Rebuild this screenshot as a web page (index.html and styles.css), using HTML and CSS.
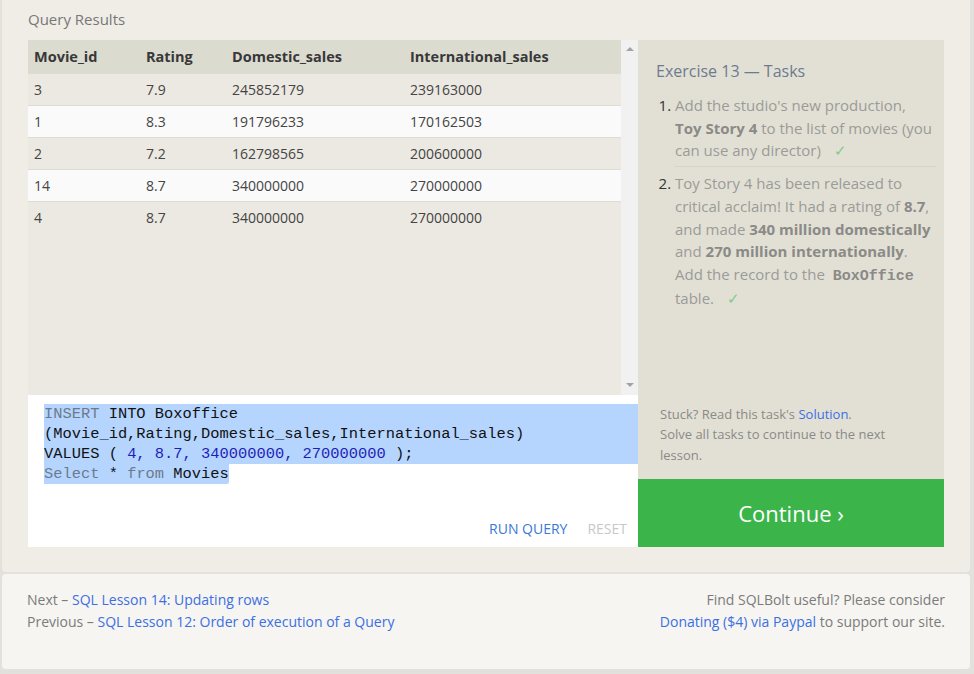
FILE: index.html
```html
<!DOCTYPE html>
<html>
<head>
<meta charset="utf-8">
<title>SQLBolt - Lesson 13</title>
<link rel="stylesheet" href="styles.css">
</head>
<body>
<div class="shell">
  <section class="lesson">
    <h2 class="results-title">Query Results</h2>
    <div class="workspace">
      <div class="left">
        <div class="results">
          <div class="table-wrap">
            <table>
              <thead>
                <tr><th class="c1">Movie_id</th><th class="c2">Rating</th><th class="c3">Domestic_sales</th><th>International_sales</th></tr>
              </thead>
              <tbody>
                <tr><td>3</td><td>7.9</td><td>245852179</td><td>239163000</td></tr>
                <tr class="alt"><td>1</td><td>8.3</td><td>191796233</td><td>170162503</td></tr>
                <tr><td>2</td><td>7.2</td><td>162798565</td><td>200600000</td></tr>
                <tr class="alt"><td>14</td><td>8.7</td><td>340000000</td><td>270000000</td></tr>
                <tr><td>4</td><td>8.7</td><td>340000000</td><td>270000000</td></tr>
              </tbody>
            </table>
          </div>
          <div class="scrollbar"><span class="arrow up"></span><span class="arrow down"></span></div>
        </div>
        <div class="editor">
          <div class="code">
            <div class="line sel"><span class="kw">INSERT</span> INTO Boxoffice</div>
            <div class="line sel">(Movie_id,Rating,Domestic_sales,International_sales)</div>
            <div class="line sel">VALUES ( <span class="num">4, 8.7, 340000000, 270000000</span> );</div>
            <div class="line"><span class="sel-part"><span class="kw">Select</span> * <span class="kw">from</span> Movies</span></div>
          </div>
          <div class="actions"><span class="run">RUN QUERY</span><span class="reset">RESET</span></div>
        </div>
      </div>
      <div class="right">
        <div class="tasks">
          <h3 class="tasks-title">Exercise 13 — Tasks</h3>
          <ol class="task-list">
            <li>Add the studio's new production, <strong>Toy Story 4</strong> to the list of movies (you can use any director) <span class="check">✓</span></li>
            <li>Toy Story 4 has been released to critical acclaim! It had a rating of <strong>8.7</strong>, and made <strong>340 million domestically</strong> and <strong>270 million internationally</strong>. Add the record to the <code>BoxOffice</code> table. <span class="check">✓</span></li>
          </ol>
          <div class="stuck">
            Stuck? Read this task's <a class="link">Solution</a>.<br>
            Solve all tasks to continue to the next lesson.
          </div>
        </div>
        <a class="continue">Continue ›</a>
      </div>
    </div>
  </section>
  <footer class="footer">
    <div class="nav">
      <div>Next – <a class="link">SQL Lesson 14: Updating rows</a></div>
      <div>Previous – <a class="link">SQL Lesson 12: Order of execution of a Query</a></div>
    </div>
    <div class="donate">
      <div>Find SQLBolt useful? Please consider</div>
      <div><a class="link">Donating ($4) via Paypal</a> to support our site.</div>
    </div>
  </footer>
</div>
</body>
</html>
```

FILE: styles.css
```css
* { box-sizing: border-box; }

body {
  margin: 0;
  background: #e3e1db;
  font-family: "Open Sans", "Noto Sans", sans-serif;
}

.shell {
  width: 968px;
  margin-left: 2px;
}

.lesson {
  background: #efede6;
  height: 572px;
  padding: 8px 0 0 26px;
  border-radius: 0 0 4px 4px;
}

.results-title {
  margin: 0 0 10px;
  font-weight: 400;
  font-size: 15px;
  line-height: 22px;
  color: #777;
}

.workspace {
  display: grid;
  grid-template-columns: 610px 306px;
}

.left {
  display: flex;
  flex-direction: column;
}

.results {
  display: flex;
  height: 355px;
  background: #ebe9e2;
}

.table-wrap { flex: 1; }

table {
  width: 100%;
  border-collapse: collapse;
}

th {
  background: #dcdbd0;
  height: 33px;
  text-align: left;
  padding: 1px 6px 0;
  font-size: 14.5px;
  font-weight: 700;
  color: #383838;
}

th.c1 { width: 112px; }
th.c2 { width: 86px; }
th.c3 { width: 178px; }

td {
  height: 32px;
  padding: 0 6px;
  font-size: 14px;
  color: #444;
  border-top: 1px solid #dddcd5;
}

tr.alt td { background: #fafafa; }

.scrollbar {
  width: 17px;
  background: #f1f1f1;
  display: flex;
  flex-direction: column;
  justify-content: space-between;
  align-items: center;
  padding: 7px 0 8px;
}

.arrow {
  width: 0;
  height: 0;
  border-left: 4px solid transparent;
  border-right: 4px solid transparent;
}
.arrow.up { border-bottom: 4px solid #a3a3a3; }
.arrow.down { border-top: 4px solid #a3a3a3; }

.editor {
  background: #fff;
  height: 152px;
  display: flex;
  flex-direction: column;
  justify-content: space-between;
  padding: 9px 0 8px 16px;
}

.code {
  font-family: "Liberation Mono", "DejaVu Sans Mono", monospace;
  font-size: 15.4px;
  line-height: 20px;
  color: #111;
}

.line { white-space: pre; height: 20px; }
.line.sel { background: #b5d5ff; }
.sel-part { background: #b5d5ff; display: inline-block; height: 20px; border-radius: 0 0 2px 0; }

.kw { color: #6c7a8c; }
.num { color: #1f1fb8; }

.actions {
  display: flex;
  justify-content: flex-end;
  gap: 20px;
  padding-right: 11px;
  font-size: 14px;
  line-height: 20px;
}
.run { color: #3a78d8; }
.reset { color: #c8c8c8; }

.right {
  display: flex;
  flex-direction: column;
}

.tasks {
  flex: 1;
  background: #e2e0d5;
  padding: 20px 8px 14px 18px;
  display: flex;
  flex-direction: column;
}

.tasks-title {
  margin: 0;
  font-weight: 400;
  font-size: 16px;
  line-height: 22px;
  color: #6d7b8e;
}

.task-list {
  margin: 12px 0 0;
  padding-left: 19px;
  font-size: 15px;
  line-height: 22.7px;
  color: #9b9b98;
}

.task-list li::marker { color: #333; }

.task-list li { padding-bottom: 4px; }
.task-list li + li {
  border-top: 1px solid #d6d4ca;
  padding-top: 5px;
}

.task-list strong { color: #8a8a87; font-weight: 700; }

.task-list code {
  font-family: "Liberation Mono", "DejaVu Sans Mono", monospace;
  font-weight: 700;
  font-size: 15px;
  line-height: 20px;
  color: #8a8a87;
  padding: 0 4px;
}

.check {
  color: #7fcb8b;
  margin-left: 9px;
}

.stuck {
  margin-top: auto;
  font-size: 13px;
  line-height: 20.5px;
  color: #8a8a87;
  padding: 0 40px 0 4px;
}

.link { color: #3b6fe3; text-decoration: none; }

.continue {
  display: flex;
  align-items: center;
  justify-content: center;
  height: 68px;
  background: #3bb54a;
  color: #fff;
  font-size: 22px;
  text-decoration: none;
}

.footer {
  margin-top: 2px;
  height: 95px;
  background: #f6f5f1;
  border-radius: 4px;
  padding: 15px 25px 0 25px;
  display: flex;
  justify-content: space-between;
  font-size: 14px;
  line-height: 21.5px;
  color: #7b7b7b;
}

.donate { text-align: right; }
```
